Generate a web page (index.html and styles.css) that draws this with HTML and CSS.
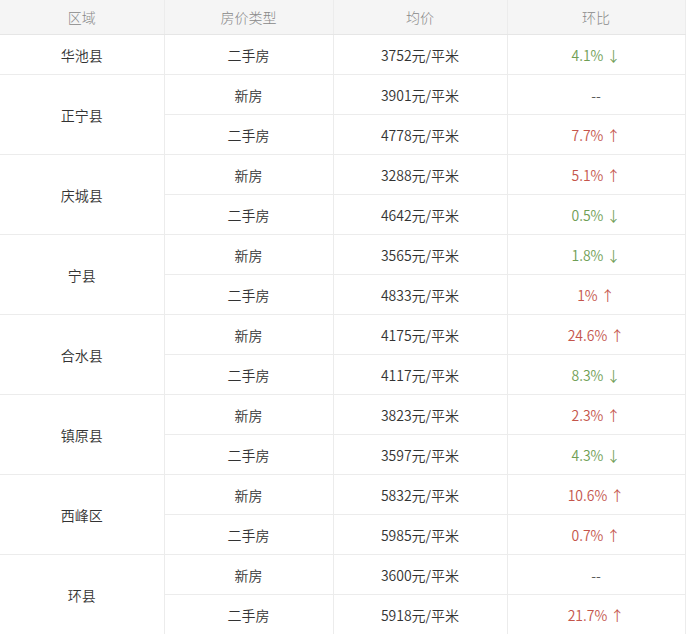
FILE: index.html
```html
<!DOCTYPE html>
<html lang="zh">
<head>
<meta charset="utf-8">
<link rel="stylesheet" href="styles.css">
</head>
<body>
<table class="price-table">
  <colgroup>
    <col class="c1"><col class="c2"><col class="c3"><col class="c4">
  </colgroup>
  <thead>
    <tr><th>区域</th><th>房价类型</th><th>均价</th><th>环比</th></tr>
  </thead>
  <tbody>
    <tr><td>华池县</td><td>二手房</td><td>3752元/平米</td><td class="down">4.1% ↓</td></tr>
    <tr><td rowspan="2">正宁县</td><td>新房</td><td>3901元/平米</td><td class="none">--</td></tr>
    <tr><td>二手房</td><td>4778元/平米</td><td class="up">7.7% ↑</td></tr>
    <tr><td rowspan="2">庆城县</td><td>新房</td><td>3288元/平米</td><td class="up">5.1% ↑</td></tr>
    <tr><td>二手房</td><td>4642元/平米</td><td class="down">0.5% ↓</td></tr>
    <tr><td rowspan="2">宁县</td><td>新房</td><td>3565元/平米</td><td class="down">1.8% ↓</td></tr>
    <tr><td>二手房</td><td>4833元/平米</td><td class="up">1% ↑</td></tr>
    <tr><td rowspan="2">合水县</td><td>新房</td><td>4175元/平米</td><td class="up">24.6% ↑</td></tr>
    <tr><td>二手房</td><td>4117元/平米</td><td class="down">8.3% ↓</td></tr>
    <tr><td rowspan="2">镇原县</td><td>新房</td><td>3823元/平米</td><td class="up">2.3% ↑</td></tr>
    <tr><td>二手房</td><td>3597元/平米</td><td class="down">4.3% ↓</td></tr>
    <tr><td rowspan="2">西峰区</td><td>新房</td><td>5832元/平米</td><td class="up">10.6% ↑</td></tr>
    <tr><td>二手房</td><td>5985元/平米</td><td class="up">0.7% ↑</td></tr>
    <tr><td rowspan="2">环县</td><td>新房</td><td>3600元/平米</td><td class="none">--</td></tr>
    <tr><td>二手房</td><td>5918元/平米</td><td class="up">21.7% ↑</td></tr>
  </tbody>
</table>
</body>
</html>
```
FILE: styles.css
```css
html, body {
  margin: 0;
  padding: 0;
  background: #ffffff;
}
body {
  font-family: "Noto Sans CJK SC", "Noto Sans", sans-serif;
  font-size: 14px;
  font-weight: 350;
  color: #333333;
}
.price-table {
  width: 685px;
  table-layout: fixed;
  border-collapse: collapse;
}
.c1 { width: 164px; }
.c2 { width: 169px; }
.c3 { width: 174px; }
.c4 { width: 178px; }
.price-table th,
.price-table td {
  padding: 0;
  text-align: center;
  vertical-align: middle;
  border-right: 1px solid #ececec;
  border-bottom: 1px solid #ececec;
}
.price-table th {
  height: 34px;
  background: #f5f5f5;
  color: #888888;
  font-weight: 300;
  border-bottom-color: #e6e6e6;
}
.price-table td {
  height: 39px;
}
.price-table .down { color: #6f9e55; }
.price-table .up { color: #c4554b; }
.price-table .none { color: #555555; }
```
